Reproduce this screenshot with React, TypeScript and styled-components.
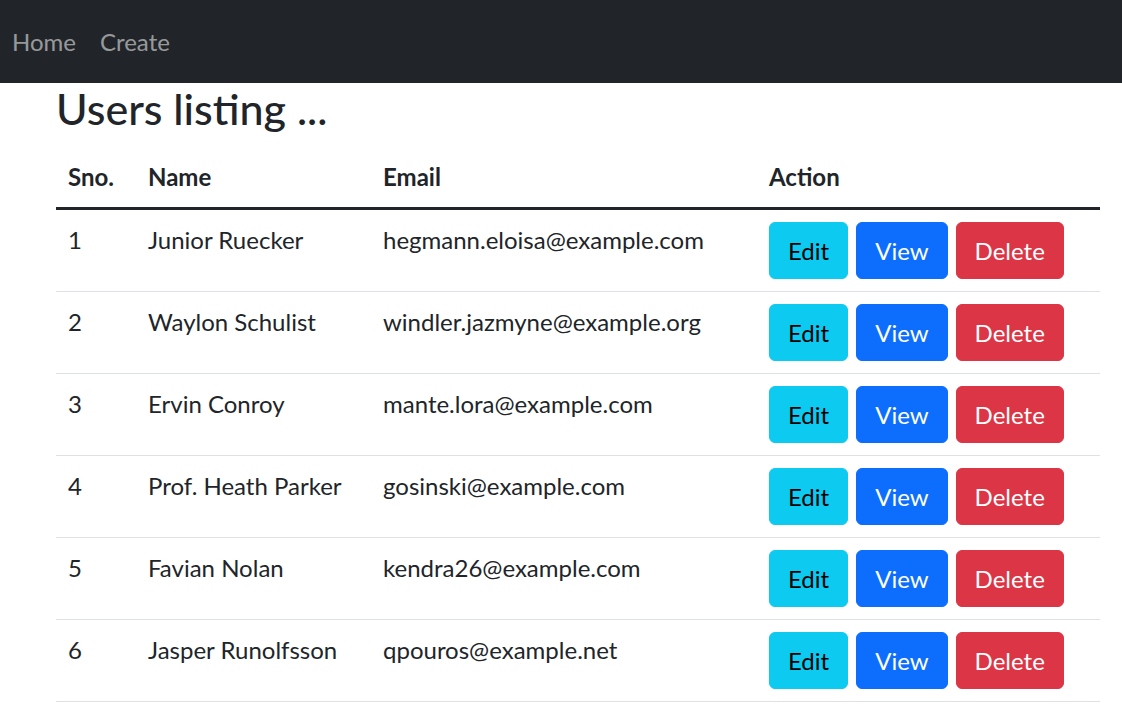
import React from "react";
import styled, { createGlobalStyle } from "styled-components";

const Global = createGlobalStyle`
  html, body { margin: 0; padding: 0; background: #fff; }
  *, *::before, *::after { box-sizing: border-box; }
  body {
    font-family: Lato, "Noto Sans", "Liberation Sans", sans-serif;
    font-size: 24px;
    line-height: 1.5;
    color: #212529;
  }
`;

const NavBar = styled.nav`
  height: 83px;
  background: #212529;
  display: flex;
  align-items: center;
`;

const NavLink = styled.a`
  padding: 0 12px;
  color: rgba(255, 255, 255, 0.55);
  text-decoration: none;
  font-size: 24px;
  line-height: 36px;
`;

const Container = styled.main`
  margin-left: 56px;
  width: 1044px;
`;

const Title = styled.h1`
  margin: 0 0 12px;
  font-size: 43px;
  line-height: 52px;
  font-weight: 500;
`;

const Table = styled.table`
  width: 100%;
  border-collapse: collapse;
  table-layout: fixed;
`;

const Th = styled.th<{ $w?: number }>`
  text-align: left;
  font-weight: 700;
  padding: 12px;
  line-height: 36px;
  border-bottom: 3px solid #212529;
  width: ${(p) => (p.$w ? `${p.$w}px` : "auto")};
`;

const Td = styled.td`
  padding: 12px;
  line-height: 36px;
  vertical-align: top;
  border-bottom: 1px solid #dee2e6;
`;

const Actions = styled.div`
  display: flex;
  gap: 8px;
`;

const Button = styled.button<{ $bg: string; $fg: string }>`
  height: 57px;
  padding: 9px 18px;
  border: 1px solid ${(p) => p.$bg};
  border-radius: 6px;
  background: ${(p) => p.$bg};
  color: ${(p) => p.$fg};
  font-family: inherit;
  font-size: 24px;
  line-height: 36px;
  cursor: pointer;
`;

const users = [
  ["Junior Ruecker", "hegmann.eloisa@example.com"],
  ["Waylon Schulist", "windler.jazmyne@example.org"],
  ["Ervin Conroy", "mante.lora@example.com"],
  ["Prof. Heath Parker", "gosinski@example.com"],
  ["Favian Nolan", "kendra26@example.com"],
  ["Jasper Runolfsson", "qpouros@example.net"],
];

export default function App() {
  return (
    <>
      <Global />
      <NavBar>
        <NavLink href="#">Home</NavLink>
        <NavLink href="#">Create</NavLink>
      </NavBar>
      <Container>
        <Title>Users listing ...</Title>
        <Table>
          <thead>
            <tr>
              <Th $w={80}>Sno.</Th>
              <Th $w={235}>Name</Th>
              <Th $w={386}>Email</Th>
              <Th>Action</Th>
            </tr>
          </thead>
          <tbody>
            {users.map(([name, email], i) => (
              <tr key={email}>
                <Td>{i + 1}</Td>
                <Td>{name}</Td>
                <Td>{email}</Td>
                <Td>
                  <Actions>
                    <Button $bg="#0dcaf0" $fg="#000">Edit</Button>
                    <Button $bg="#0d6efd" $fg="#fff">View</Button>
                    <Button $bg="#dc3545" $fg="#fff">Delete</Button>
                  </Actions>
                </Td>
              </tr>
            ))}
          </tbody>
        </Table>
      </Container>
    </>
  );
}
